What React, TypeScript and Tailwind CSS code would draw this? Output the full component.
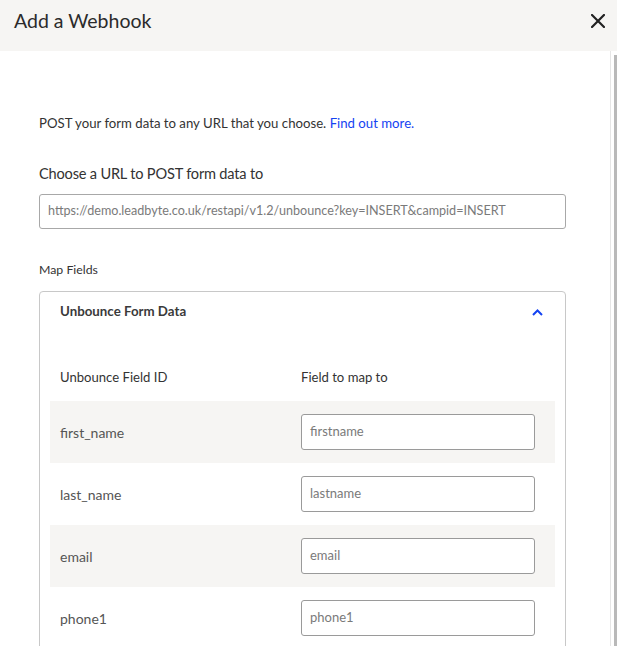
import React from "react";

const rows = [
  { id: "first_name", ph: "firstname" },
  { id: "last_name", ph: "lastname" },
  { id: "email", ph: "email" },
  { id: "phone1", ph: "phone1" },
];

export default function App() {
  return (
    <div className="w-[617px] h-[646px] overflow-hidden bg-white text-[#333] font-['Lato','Noto_Sans',sans-serif]">
      <div className="h-[51px] bg-[#f6f5f3] flex items-start justify-between pl-[14px] pr-[12px] pt-[9px]">
        <h1 className="text-[19.5px] leading-[24px] text-[#2b2b2b] font-normal">Add a Webhook</h1>
        <svg width="14" height="14" viewBox="0 0 14 14" className="text-[#222] mt-[5px]">
          <path d="M1 1 L13 13 M13 1 L1 13" stroke="currentColor" strokeWidth="2.2" strokeLinecap="square" />
        </svg>
      </div>
      <div className="flex h-[595px]">
        <div className="flex-1 pl-[39px] pr-[44px] pt-[62px]">
          <p className="text-[13.2px] leading-[20px] text-[#333]">
            POST your form data to any URL that you choose.{" "}
            <a className="text-[#1443f2]">Find out more.</a>
          </p>
          <div className="mt-[30px] text-[14.6px] tracking-[-0.2px] leading-[22px] text-[#333]">Choose a URL to POST form data to</div>
          <div className="mt-[9px] h-[35px] border border-[#a8a8a8] rounded-[3px] flex items-center pl-[8px] text-[12.6px] text-[#7a7a7a]">
            https://demo.leadbyte.co.uk/restapi/v1.2/unbounce?key=INSERT&amp;campid=INSERT
          </div>
          <div className="mt-[32px] text-[12.3px] leading-[18px] text-[#333]">Map Fields</div>
          <div className="mt-[12px] border border-[#c8c8c8] rounded-[4px] h-[400px] pt-[10px]">
            <div className="flex items-center justify-between pl-[20px] pr-[22px] h-[20px]">
              <span className="text-[13.3px] font-bold text-[#3a3a3a]">Unbounce Form Data</span>
              <svg width="11" height="7" viewBox="0 0 11 7">
                <path d="M1 6 L5.5 1.5 L10 6" fill="none" stroke="#1443f2" strokeWidth="2" />
              </svg>
            </div>
            <div className="mx-[10px] mt-[45px] grid grid-cols-[241px_1fr] px-[10px] text-[13.1px] leading-[20px] text-[#333]">
              <span>Unbounce Field ID</span>
              <span>Field to map to</span>
            </div>
            <div className="mx-[10px] mt-[14px]">
              {rows.map((r, i) => (
                <div
                  key={r.id}
                  className={`h-[62px] grid grid-cols-[241px_1fr] items-center px-[10px] ${i % 2 === 0 ? "bg-[#f6f5f3]" : "bg-white"}`}
                >
                  <span className="text-[14px] text-[#555]">{r.id}</span>
                  <div className="w-[234px] h-[36px] bg-white border border-[#9a9a9a] rounded-[3px] flex items-center pl-[8px] text-[13px] text-[#7a7a7a]">
                    {r.ph}
                  </div>
                </div>
              ))}
            </div>
          </div>
        </div>
        <div className="w-[7px] flex">
          <div className="w-[1px] bg-[#e6e6e6]" />
          <div className="w-[3px]" />
          <div className="w-[3px] mt-[4px] bg-[#b9b9b9]" />
        </div>
      </div>
    </div>
  );
}
